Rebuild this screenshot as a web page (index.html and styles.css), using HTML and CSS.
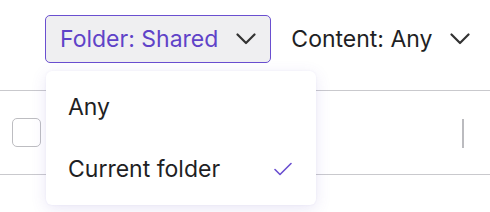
FILE: index.html
```html
<!DOCTYPE html>
<html>
<head>
<meta charset="utf-8">
<link rel="stylesheet" href="styles.css">
</head>
<body>
<div class="toolbar">
  <div class="filter">
    <button class="select select-active">
      <span class="label">Folder: Shared</span>
      <svg class="chev" width="20" height="12" viewBox="0 0 20 12"><path d="M1.5 1.5 L10 10 L18.5 1.5" fill="none" stroke="#333" stroke-width="2.2" stroke-linecap="round" stroke-linejoin="round"/></svg>
    </button>
    <div class="menu">
      <div class="item">Any</div>
      <div class="item">Current folder
        <svg class="check" width="18" height="14" viewBox="0 0 18 14"><path d="M1 7.5 L6 12.5 L17 1.5" fill="none" stroke="#6a4fd0" stroke-width="1.6" stroke-linecap="round" stroke-linejoin="round"/></svg>
      </div>
    </div>
  </div>
  <button class="select">
    <span class="label">Content: Any</span>
    <svg class="chev" width="20" height="12" viewBox="0 0 20 12"><path d="M1.5 1.5 L10 10 L18.5 1.5" fill="none" stroke="#333" stroke-width="2.2" stroke-linecap="round" stroke-linejoin="round"/></svg>
  </button>
</div>
<div class="row">
  <span class="checkbox"></span>
  <span class="divider"></span>
</div>
</body>
</html>
```
FILE: styles.css
```css
* { box-sizing: border-box; }
html, body { margin: 0; background: #fff; }
body {
  font-family: Inter, "Noto Sans", sans-serif;
  width: 490px;
  height: 212px;
  overflow: hidden;
}
.toolbar {
  display: flex;
  align-items: center;
  gap: 5px;
  padding: 15px 0 0 45px;
  height: 63px;
}
.filter { position: relative; }
.select {
  display: flex;
  align-items: center;
  gap: 18px;
  height: 48px;
  padding: 0 14px;
  border: 1px solid transparent;
  border-radius: 5px;
  background: transparent;
  font-family: inherit;
  font-size: 23px;
  color: #1f1f24;
  white-space: nowrap;
  text-align: left;
  cursor: pointer;
}
.select-active {
  border-color: #6a4fd0;
  background: #efeff1;
  color: #5f43c8;
}
.label { line-height: 1; white-space: nowrap; }
.chev { display: block; flex-shrink: 0; }
.menu {
  position: absolute;
  top: 56px;
  left: 1px;
  width: 270px;
  padding: 5px 0;
  background: #fff;
  border-radius: 6px;
  box-shadow: 0 4px 16px rgba(90, 70, 190, 0.13), 0 0 2px rgba(90, 70, 190, 0.08);
  z-index: 2;
}
.item {
  display: flex;
  align-items: center;
  justify-content: space-between;
  height: 62px;
  padding: 0 24px 0 22px;
  font-size: 23px;
  color: #1f1f24;
}
.check { display: block; }
.row {
  display: flex;
  align-items: center;
  justify-content: space-between;
  margin-top: 27px;
  height: 85px;
  border-top: 1px solid #c9c9cd;
  border-bottom: 1px solid #c9c9cd;
  padding: 0 26px 0 12px;
}
.checkbox {
  width: 29px;
  height: 29px;
  border: 1px solid #bdbdc1;
  border-radius: 5px;
  background: #fff;
}
.divider {
  width: 2px;
  height: 29px;
  background: #bbbbbf;
  margin-top: 2px;
}
```
